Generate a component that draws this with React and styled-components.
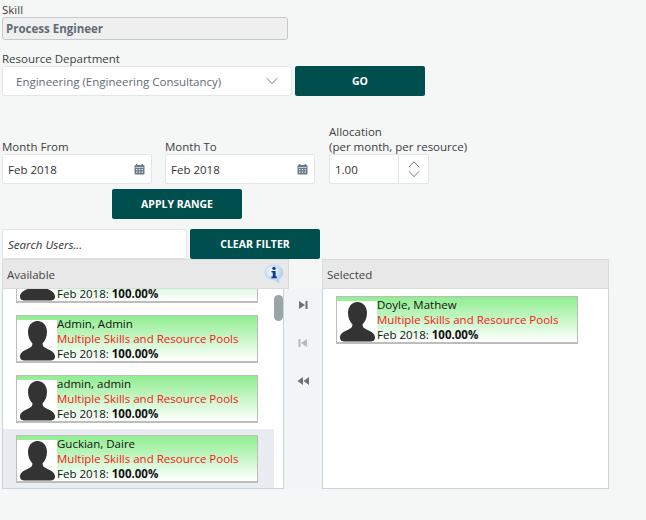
import React from "react";
import styled, { createGlobalStyle } from "styled-components";

const GlobalStyle = createGlobalStyle`
  html, body {
    margin: 0;
    padding: 0;
    background: #f5f7f7;
  }
  body {
    font-family: "Open Sans", "Noto Sans", sans-serif;
    font-size: 11.5px;
    color: #333;
  }
`;

const Page = styled.div`
  width: 646px;
  height: 520px;
  overflow: hidden;
  box-sizing: border-box;
  padding: 3px 0 0 2px;
`;

const Label = styled.label`
  display: block;
  font-size: 11.5px;
  line-height: ${(p) => p.$line || 14}px;
  color: #3d3d3d;
  white-space: nowrap;
`;

const ReadOnlyField = styled.div`
  box-sizing: border-box;
  width: 286px;
  height: 23px;
  margin-bottom: 12px;
  padding-left: 3px;
  display: flex;
  align-items: center;
  background: #efefef;
  border: 1px solid #c5c9cb;
  border-radius: 3px;
  font-weight: 700;
  color: #5f6b76;
`;

const Row = styled.div`
  display: flex;
  align-items: ${(p) => p.$align || "flex-start"};
  gap: ${(p) => p.$gap || 3}px;
`;

const Field = styled.div`
  box-sizing: border-box;
  width: ${(p) => p.$width}px;
  height: 30px;
  display: flex;
  align-items: center;
  justify-content: space-between;
  background: #fff;
  border: 1px solid #e3e6e8;
  border-radius: 2px;
  padding: 0 ${(p) => p.$right || 6}px 0 ${(p) => p.$left || 5}px;
  color: ${(p) => p.$color || "#333"};
  font-style: ${(p) => (p.$italic ? "italic" : "normal")};
`;

const Action = styled.button`
  width: 130px;
  height: 30px;
  padding: 0;
  border: none;
  border-radius: 2px;
  background: #004f4f;
  color: #fff;
  font-family: inherit;
  font-size: 10.5px;
  font-weight: 700;
  cursor: pointer;
`;

const DateColumns = styled.div`
  display: flex;
  align-items: flex-end;
  margin-top: 28px;
`;

const DateColumn = styled.div`
  width: ${(p) => p.$width}px;
`;

const Spinner = styled.div`
  box-sizing: border-box;
  width: 100px;
  height: 30px;
  display: flex;
  background: #fff;
  border: 1px solid #e3e6e8;
  border-radius: 2px;
`;

const SpinnerValue = styled.div`
  flex: 1;
  display: flex;
  align-items: center;
  padding-left: 5px;
`;

const SpinnerArrows = styled.div`
  width: 30px;
  display: flex;
  flex-direction: column;
  align-items: center;
  justify-content: space-around;
  padding: 4px 0;
  box-sizing: border-box;
  border-left: 1px solid #e3e6e8;
`;

const ApplyRow = styled.div`
  margin: 5px 0 10px 110px;
`;

const Lists = styled.div`
  display: flex;
  align-items: flex-start;
`;

const Panel = styled.div`
  width: ${(p) => p.$width}px;
  flex-shrink: 0;
`;

const PanelHeader = styled.div`
  box-sizing: border-box;
  width: ${(p) => p.$width}px;
  height: 30px;
  display: flex;
  align-items: center;
  justify-content: space-between;
  padding: 0 4px;
  background: #e8e8e8;
  border: 1px solid #d8dcdc;
  color: #444;
`;

const PanelBody = styled.div`
  box-sizing: border-box;
  height: 200px;
  width: ${(p) => p.$width}px;
  display: flex;
  background: #fff;
  border: 1px solid #c9d3da;
  border-top: none;
  overflow: hidden;
`;

const Viewport = styled.div`
  flex: 1;
  overflow: hidden;
`;

const ScrolledList = styled.div`
  margin-top: -40px;
`;

const Track = styled.div`
  width: 9px;
  flex-shrink: 0;
`;

const Thumb = styled.div`
  width: 9px;
  height: 26px;
  margin-top: 6px;
  border-radius: 5px;
  background: #9aa5a5;
`;

const ListRow = styled.div`
  height: 60px;
  box-sizing: border-box;
  padding: ${(p) => p.$top || 6}px 0 0 13px;
  background: ${(p) => (p.$active ? "#e9edf1" : "transparent")};
`;

const Card = styled.div`
  box-sizing: border-box;
  width: 242px;
  height: 48px;
  display: flex;
  border: 1px solid #bdbdbd;
  border-bottom-width: 2px;
  background: linear-gradient(#90ee90, #fff);
`;

const Avatar = styled.div`
  width: 40px;
  height: 41px;
  margin-top: 4px;
  background: #fff;
  flex-shrink: 0;
`;

const CardText = styled.div`
  display: flex;
  flex-direction: column;
  justify-content: flex-end;
  line-height: 15px;
  color: #111;
  white-space: nowrap;
`;

const Reason = styled.div`
  color: #fa1616;
`;

const Strong = styled.b`
  font-weight: 700;
`;

const Mover = styled.div`
  width: 38px;
  height: 200px;
  margin-top: 30px;
  flex-shrink: 0;
  display: flex;
  flex-direction: column;
  align-items: center;
  gap: 20px;
  padding-top: 7px;
  box-sizing: border-box;
  background: #f2f5f6;
`;

const MoveButton = styled.div`
  height: 18px;
  display: flex;
  align-items: center;
  justify-content: center;
`;

const Chevron = ({ up, size = 16, color = "#6b7478" }) => (
  <svg width={size} height={size * 0.6} viewBox="0 0 16 10" fill="none" stroke={color} strokeWidth="1.1">
    <path d={up ? "M2 8.5 L8 2 L14 8.5" : "M2 1.5 L8 8 L14 1.5"} />
  </svg>
);

const CalendarIcon = () => (
  <svg width="11" height="11" viewBox="0 0 11 11">
    <rect x="0.5" y="1" width="10" height="9.5" rx="1" fill="#6c7a89" />
    <rect x="2" y="0" width="1.4" height="2" fill="#6c7a89" />
    <rect x="7.6" y="0" width="1.4" height="2" fill="#6c7a89" />
    <rect x="1.5" y="3.2" width="8" height="0.8" fill="#dfe3e6" />
    <path d="M2 5h1.4v1.2H2zM4.8 5h1.4v1.2H4.8zM7.6 5H9v1.2H7.6zM2 7.5h1.4v1.2H2zM4.8 7.5h1.4v1.2H4.8zM7.6 7.5H9v1.2H7.6z" fill="#dfe3e6" />
  </svg>
);

const InfoIcon = () => (
  <svg width="20" height="20" viewBox="0 0 20 20">
    <defs>
      <radialGradient id="bubble" cx="0.4" cy="0.35" r="0.7">
        <stop offset="0" stopColor="#ffffff" />
        <stop offset="1" stopColor="#9cc6f0" />
      </radialGradient>
    </defs>
    <path d="M10 1 C15 1 19 4.2 19 8.6 C19 12.2 16.6 14.4 14.4 15 L15 19 L10.6 15.6 C5 15.6 1 13 1 8.6 C1 4.2 5 1 10 1 Z" fill="url(#bubble)" stroke="#b4d0ec" strokeWidth="0.6" />
    <circle cx="10" cy="4.4" r="1.7" fill="#12358f" />
    <path d="M7.4 7 H11.6 V12.6 H12.8 V14.2 H7.4 V12.6 H8.8 V8.6 H7.4 Z" fill="#12358f" />
  </svg>
);

const PersonIcon = () => (
  <svg width="40" height="41" viewBox="0 0 40 41">
    <path
      d="M20.5 1 C26.5 1 30 6 30 12 C30 17 28 21 25.5 23.5 C25.5 26 27 27.5 30.5 29 C35 31 38 33 38 36.5 C38 39.5 36 40.5 33 40.5 L8 40.5 C5 40.5 3 39.5 3 36.5 C3 33 6 31 10.5 29 C14 27.5 15.5 26 15.5 23.5 C13 21 11 17 11 12 C11 6 14.5 1 20.5 1 Z"
      fill="#333"
    />
  </svg>
);

const MoveIcon = ({ kind, color }) => {
  const paths = {
    last: "M1 1 L7 5 L1 9 Z M7.5 1 H9.5 V9 H7.5 Z",
    first: "M9 1 L3 5 L9 9 Z M0.5 1 H2.5 V9 H0.5 Z",
    all: "M6 1 L0.5 5 L6 9 Z M12 1 L6.5 5 L12 9 Z",
  };
  return (
    <svg width={kind === "all" ? 12 : 10} height="10" viewBox={kind === "all" ? "0 0 12 10" : "0 0 10 10"}>
      <path d={paths[kind]} fill={color} />
    </svg>
  );
};

const ResourceCard = ({ name }) => (
  <Card>
    <Avatar>
      <PersonIcon />
    </Avatar>
    <CardText>
      {name && <div>{name}</div>}
      {name && <Reason>Multiple Skills and Resource Pools</Reason>}
      <div>
        Feb 2018: <Strong>100.00%</Strong>
      </div>
    </CardText>
  </Card>
);

// first entry is scrolled almost out of view, only its last line shows
const available = [
  { id: 1 },
  { id: 2, name: "Admin, Admin" },
  { id: 3, name: "admin, admin" },
  { id: 4, name: "Guckian, Daire", active: true },
];

const App = () => (
  <Page>
    <GlobalStyle />
    <Label>Skill</Label>
    <ReadOnlyField>Process Engineer</ReadOnlyField>

    <Label>Resource Department</Label>
    <Row>
      <Field $width={290} $left={13} $right={12} $color="#5f6b76">
        Engineering (Engineering Consultancy)
        <Chevron size={14} />
      </Field>
      <Action>GO</Action>
    </Row>

    <DateColumns>
      <DateColumn $width={163}>
        <Label $line={15}>Month From</Label>
        <Field $width={150}>
          Feb 2018
          <CalendarIcon />
        </Field>
      </DateColumn>
      <DateColumn $width={164}>
        <Label $line={15}>Month To</Label>
        <Field $width={150}>
          Feb 2018
          <CalendarIcon />
        </Field>
      </DateColumn>
      <DateColumn $width={140}>
        <Label $line={15}>
          Allocation
          <br />
          (per month, per resource)
        </Label>
        <Spinner>
          <SpinnerValue>1.00</SpinnerValue>
          <SpinnerArrows>
            <Chevron up size={14} />
            <Chevron size={14} />
          </SpinnerArrows>
        </Spinner>
      </DateColumn>
    </DateColumns>

    <ApplyRow>
      <Action>APPLY RANGE</Action>
    </ApplyRow>

    <Row>
      <Field $width={185} $italic>
        Search Users...
      </Field>
      <Action>CLEAR FILTER</Action>
    </Row>

    <Lists>
      <Panel $width={282}>
        <PanelHeader $width={287}>
          Available
          <InfoIcon />
        </PanelHeader>
        <PanelBody $width={282}>
          <Viewport>
            <ScrolledList>
              {available.map((person) => (
                <ListRow key={person.id} $active={person.active}>
                  <ResourceCard name={person.name} />
                </ListRow>
              ))}
            </ScrolledList>
          </Viewport>
          <Track>
            <Thumb />
          </Track>
        </PanelBody>
      </Panel>

      <Mover>
        <MoveButton>
          <MoveIcon kind="last" color="#6b7278" />
        </MoveButton>
        <MoveButton>
          <MoveIcon kind="first" color="#b4babd" />
        </MoveButton>
        <MoveButton>
          <MoveIcon kind="all" color="#6b7278" />
        </MoveButton>
      </Mover>

      <Panel $width={287}>
        <PanelHeader $width={287}>Selected</PanelHeader>
        <PanelBody $width={287}>
          <ListRow $top={7}>
            <ResourceCard name="Doyle, Mathew" />
          </ListRow>
        </PanelBody>
      </Panel>
    </Lists>
  </Page>
);

export default App;
